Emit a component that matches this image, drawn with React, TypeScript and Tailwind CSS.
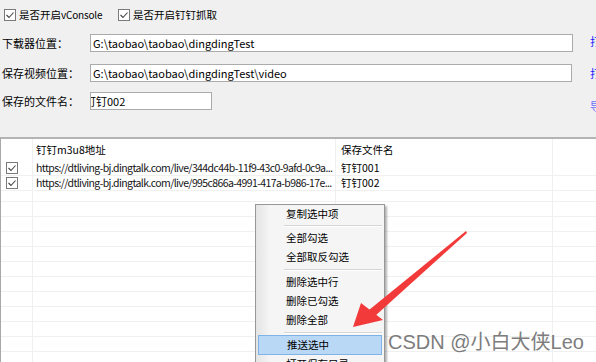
import React from "react";

const font = { fontFamily: '"Noto Sans CJK SC", "Noto Sans", sans-serif' };

function Check() {
  return (
    <svg width="12" height="12" viewBox="0 0 12 12" className="shrink-0">
      <rect x="0.5" y="0.5" width="11" height="11" fill="#fff" stroke="#7a7a7a" />
      <polyline points="2.5,6 5,8.5 9.5,3.5" fill="none" stroke="#444" strokeWidth="1.1" />
    </svg>
  );
}

function Field({ label, value, width, shift }: { label: string; value: string; width: string; shift?: boolean }) {
  return (
    <div className="flex items-center h-[18px]">
      <div className="w-[90px] pl-[2px] text-[11px] text-black leading-none whitespace-nowrap">{label}</div>
      <div className={`${width} h-[18px] bg-white border border-[#ababab] flex items-center overflow-hidden`}>
        {shift ? (
          <span className="ml-[-6px] text-[11px] text-black leading-none whitespace-nowrap">{value}</span>
        ) : (
          <span className="pl-[2px] text-[11px] text-black leading-none whitespace-nowrap">{value}</span>
        )}
      </div>
      <div className="flex-1" />
    </div>
  );
}

export default function App() {
  const empty = Array.from({ length: 12 });
  return (
    <div className="relative w-[596px] h-[362px] overflow-hidden bg-[#f0f0f0]" style={font}>
      {/* top panel */}
      <div className="h-[137px] pt-[9px]">
        <div className="flex items-center pl-[4px] h-[12px] text-[10.5px] leading-none">
          <Check />
          <span className="w-[102px] pl-[3px] whitespace-nowrap">
            是否开启<span className="text-[10px] tracking-[-0.2px]">vConsole</span>
          </span>
          <Check />
          <span className="pl-[3px] whitespace-nowrap">是否开启钉钉抓取</span>
        </div>
        <div className="mt-[13px] flex flex-col">
          <Field label="下载器位置：" value="G:\taobao\taobao\dingdingTest" width="w-[483px]" />
          <div className="h-[12px]" />
          <Field label="保存视频位置：" value="G:\taobao\taobao\dingdingTest\video" width="w-[482px]" />
          <div className="h-[10px]" />
          <Field label="保存的文件名：" value="钉钉002" width="w-[122px]" shift />
        </div>
      </div>
      {/* blue clipped link texts on the right */}
      <div className="absolute left-[590px] top-[32px] text-[11px] text-[#1a1aff] leading-[18px] whitespace-nowrap">打开</div>
      <div className="absolute left-[590px] top-[64px] text-[11px] text-[#1a1aff] leading-[18px] whitespace-nowrap">打开</div>
      <div className="absolute left-[590px] top-[97px] text-[11px] text-[#6a6aff] leading-[18px] whitespace-nowrap">导出</div>

      {/* table */}
      <div className="h-[225px] bg-white border-t-2 border-[#b4b4b4] border-l border-l-[#a8a8a8] flex flex-col">
        <div className="flex h-[22px] shrink-0">
          <div className="w-[32px] border-r border-[#f0f0f0]" />
          <div className="w-[303px] pl-[3px] flex items-center text-[10.5px] leading-none border-r border-[#f0f0f0]">钉钉m3u8地址</div>
          <div className="w-[217px] pl-[5px] flex items-center text-[10.5px] leading-none border-r border-[#f0f0f0]">保存文件名</div>
          <div className="flex-1" />
        </div>
        {[
          ["https://dtliving-bj.dingtalk.com/live/344dc44b-11f9-43c0-9afd-0c9a...", "钉钉001"],
          ["https://dtliving-bj.dingtalk.com/live/995c866a-4991-417a-b986-17e...", "钉钉002"],
        ].map(([u, n], i) => (
          <div key={i} className="flex h-[15px] shrink-0 border-b border-[#f0f0f0]">
            <div className="w-[32px] pl-[5px] flex items-center border-r border-[#f0f0f0]">
              <Check />
            </div>
            <div className="w-[303px] pl-[3px] flex items-center text-[10.5px] tracking-[-0.6px] leading-none text-[#151515] whitespace-nowrap overflow-hidden border-r border-[#f0f0f0]">
              {u}
            </div>
            <div className="w-[217px] pl-[5px] flex items-center text-[10.5px] leading-none border-r border-[#f0f0f0]">{n}</div>
            <div className="flex-1" />
          </div>
        ))}
        <div className="flex h-[11px] shrink-0 border-b border-[#f0f0f0]">
          <div className="w-[32px] border-r border-[#f0f0f0]" />
          <div className="w-[303px] border-r border-[#f0f0f0]" />
          <div className="w-[217px] border-r border-[#f0f0f0]" />
        </div>
        {empty.map((_, i) => (
          <div key={i} className="flex h-[15px] shrink-0 border-b border-[#f0f0f0]">
            <div className="w-[32px] border-r border-[#f0f0f0]" />
            <div className="w-[303px] border-r border-[#f0f0f0]" />
            <div className="w-[217px] border-r border-[#f0f0f0]" />
          </div>
        ))}
      </div>

      {/* context menu */}
      <div className="absolute left-[255px] top-[204px] w-[130px] h-[170px] bg-[#f5f5f5] border border-[#979797] shadow-[2px_2px_2px_rgba(0,0,0,0.3)] text-[10.5px] leading-none">
        <div className="absolute left-0 top-0 bottom-0 w-[14px] bg-gradient-to-r from-[#e4e4e4] to-[#f5f5f5]" />
        <div className="relative flex flex-col">
          <div className="h-[18px] pl-[30px] flex items-center">复制选中项</div>
          <div className="h-[6px] pl-[28px] flex items-center"><div className="flex-1 h-[2px] border-t border-[#d5d5d5] border-b border-b-white mr-[2px]" /></div>
          <div className="h-[19px] pl-[30px] flex items-center">全部勾选</div>
          <div className="h-[19px] pl-[30px] flex items-center">全部取反勾选</div>
          <div className="h-[6px] pl-[28px] flex items-center"><div className="flex-1 h-[2px] border-t border-[#d5d5d5] border-b border-b-white mr-[2px]" /></div>
          <div className="h-[19px] pl-[30px] flex items-center">删除选中行</div>
          <div className="h-[19px] pl-[30px] flex items-center">删除已勾选</div>
          <div className="h-[19px] pl-[30px] flex items-center">删除全部</div>
          <div className="h-[5px] pl-[28px] flex items-center"><div className="flex-1 h-[2px] border-t border-[#d5d5d5] border-b border-b-white mr-[2px]" /></div>
          <div className="h-[20px] mx-[2px] pl-[28px] flex items-center bg-[#b9d8f5] border border-[#7fb2e5]">推送选中</div>
          <div className="h-[19px] pl-[30px] flex items-center">打开保存目录</div>
        </div>
      </div>

      {/* red arrow */}
      <svg className="absolute left-0 top-0" width="596" height="362" viewBox="0 0 596 362">
        <polygon points="466,231 467,233 375,316 369,310" fill="#f23a3a" />
        <polygon points="353,327 361,303 383,320" fill="#f23a3a" />
      </svg>

      {/* watermark */}
      <div
        className="absolute left-[388px] top-[330px] text-[20px] leading-[24px] text-[#7d7d7d] whitespace-nowrap"
        style={{ fontFamily: '"Liberation Sans", "Noto Sans CJK SC", sans-serif' }}
      >
        CSDN @小白大侠Leo
      </div>
    </div>
  );
}
